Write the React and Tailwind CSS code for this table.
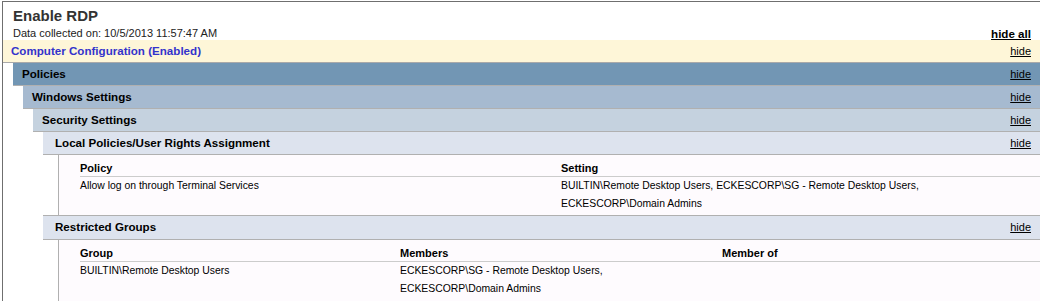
export default function App() {
  return (
    <div className="w-[1040px] h-[301px] overflow-hidden bg-white font-['Liberation_Sans',Arial,sans-serif] text-black">
      <div className="mt-px ml-[2px] h-[300px] border-t border-l border-[#6f6f6f]">
        {/* Header */}
        <div className="h-[38px] pl-[10px] pr-[9px] pt-[5px]">
          <div className="text-[15px] leading-[18px] font-bold text-[#333333]">Enable RDP</div>
          <div className="mt-[2px] flex items-end justify-between">
            <span className="text-[11px] leading-[13px] text-[#222222]">Data collected on: 10/5/2013 11:57:47 AM</span>
            <span className="text-[11.6px] leading-[13px] font-bold underline">hide all</span>
          </div>
        </div>

        {/* Computer Configuration */}
        <div className="flex h-[23px] justify-between border-b border-[#a9a9a9] bg-[#fef6d8] pl-[8px] pr-[9px]">
          <span className="text-[11.6px] leading-[22px] font-bold text-[#3333cc]">Computer Configuration (Enabled)</span>
          <span className="text-[11px] leading-[22px] underline">hide</span>
        </div>

        {/* Policies */}
        <div className="ml-[10px] flex h-[23px] justify-between border-b border-[#b0b0b0] bg-[#7296b4] pl-[9px] pr-[9px]">
          <span className="text-[11.6px] leading-[22px] font-bold">Policies</span>
          <span className="text-[11px] leading-[22px] underline">hide</span>
        </div>

        {/* Windows Settings */}
        <div className="ml-[20px] flex h-[23px] justify-between border-b border-[#b0b0b0] bg-[#a6bad0] pl-[9px] pr-[9px]">
          <span className="text-[11.6px] leading-[22px] font-bold">Windows Settings</span>
          <span className="text-[11px] leading-[22px] underline">hide</span>
        </div>

        {/* Security Settings */}
        <div className="ml-[30px] flex h-[23px] justify-between border-b border-[#b0b0b0] bg-[#c5d2df] pl-[9px] pr-[9px]">
          <span className="text-[11.6px] leading-[22px] font-bold">Security Settings</span>
          <span className="text-[11px] leading-[22px] underline">hide</span>
        </div>

        {/* Local Policies */}
        <div className="ml-[40px] flex h-[23px] justify-between border-b border-[#b0b0b0] bg-[#dde3ee] pl-[12px] pr-[9px]">
          <span className="text-[11.6px] leading-[22px] font-bold">Local Policies/User Rights Assignment</span>
          <span className="text-[11px] leading-[22px] underline">hide</span>
        </div>

        <div className="ml-[55px] border-l border-[#b0b0b0] bg-[#fefbfe] pl-[21px] pb-[2px]">
          <table className="w-full table-fixed border-collapse">
            <thead>
              <tr>
                <th className="w-[481px] border-b border-[#cccccc] pt-[7px] pb-[1px] text-left align-top text-[11px] leading-[13px] font-bold">Policy</th>
                <th className="border-b border-[#cccccc] pt-[7px] pb-[1px] text-left align-top text-[11px] leading-[13px] font-bold">Setting</th>
              </tr>
            </thead>
            <tbody>
              <tr>
                <td className="align-top text-[10.4px] leading-[18px]">Allow log on through Terminal Services</td>
                <td className="align-top text-[10.4px] leading-[18px]">
                  BUILTIN\Remote Desktop Users, ECKESCORP\SG - Remote Desktop Users,
                  <br />
                  ECKESCORP\Domain Admins
                </td>
              </tr>
            </tbody>
          </table>
        </div>

        {/* Restricted Groups */}
        <div className="ml-[40px] flex h-[25px] justify-between border-y border-[#b0b0b0] bg-[#dde3ee] pl-[12px] pr-[9px]">
          <span className="text-[11.6px] leading-[22px] font-bold">Restricted Groups</span>
          <span className="text-[11px] leading-[22px] underline">hide</span>
        </div>

        <div className="ml-[55px] h-[80px] border-l border-[#b0b0b0] bg-[#fefbfe] pl-[21px]">
          <table className="w-full table-fixed border-collapse">
            <thead>
              <tr>
                <th className="w-[320px] border-b border-[#cccccc] pt-[7px] pb-[1px] text-left align-top text-[11px] leading-[13px] font-bold">Group</th>
                <th className="w-[322px] border-b border-[#cccccc] pt-[7px] pb-[1px] text-left align-top text-[11px] leading-[13px] font-bold">Members</th>
                <th className="border-b border-[#cccccc] pt-[7px] pb-[1px] text-left align-top text-[11px] leading-[13px] font-bold">Member of</th>
              </tr>
            </thead>
            <tbody>
              <tr>
                <td className="align-top text-[10.4px] leading-[18px]">BUILTIN\Remote Desktop Users</td>
                <td className="align-top text-[10.4px] leading-[18px]">
                  ECKESCORP\SG - Remote Desktop Users,
                  <br />
                  ECKESCORP\Domain Admins
                </td>
                <td className="align-top text-[10.4px] leading-[18px]"></td>
              </tr>
            </tbody>
          </table>
        </div>
      </div>
    </div>
  );
}
